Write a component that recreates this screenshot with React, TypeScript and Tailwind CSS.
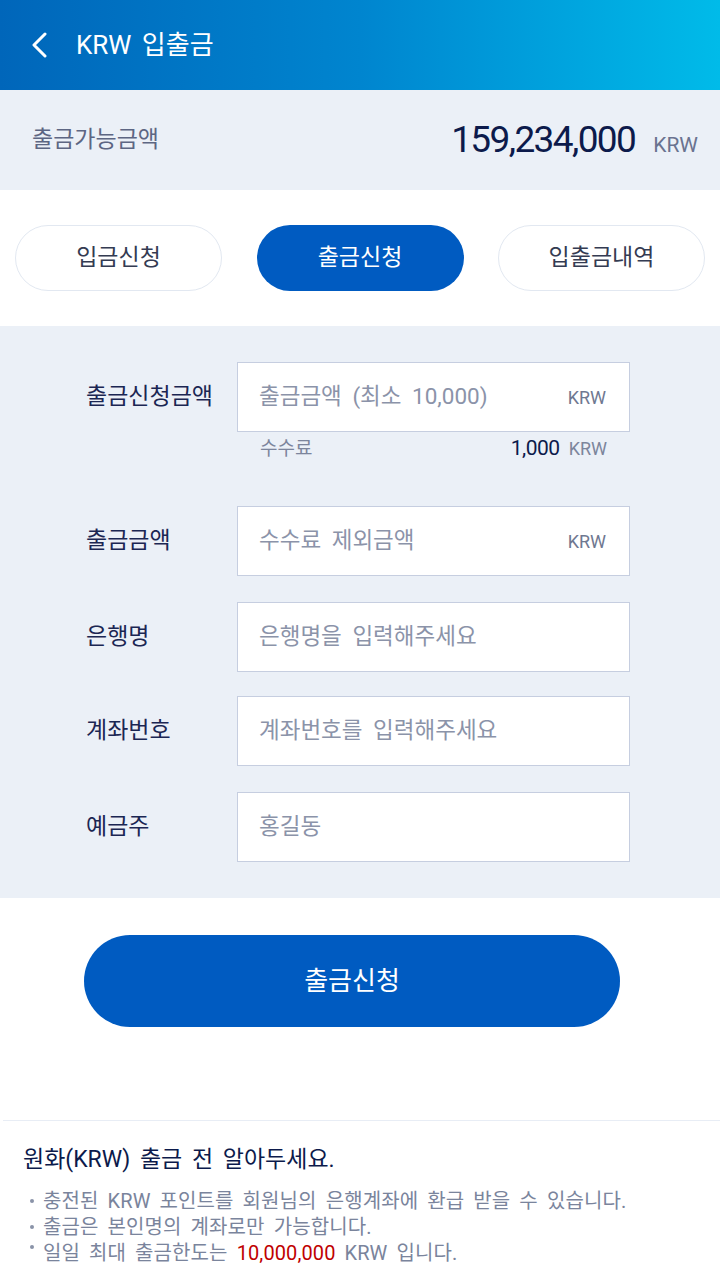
const font = { fontFamily: 'Roboto, "Noto Sans CJK KR", "Noto Sans", sans-serif' };

const Field = ({ label, placeholder, unit }: { label: string; placeholder: string; unit?: string }) => (
  <div className="flex items-center">
    <div className="w-[151px] text-[23px] text-[#1b2653]">{label}</div>
    <div className="flex h-[70px] w-[393px] items-center justify-between border border-[#c6cee0] bg-white pl-[21px] pr-[23px]">
      <span className="text-[22.5px] text-[#8b93a9] [word-spacing:5px]">{placeholder}</span>
      {unit && <span className="text-[18px] text-[#6f7891]">{unit}</span>}
    </div>
  </div>
);

const App = () => {
  return (
    <div className="min-h-[1280px] w-[720px] bg-white" style={font}>
      {/* header */}
      <div className="flex h-[90px] items-center bg-gradient-to-r from-[#0066ba] via-[#0085cf] to-[#00bbe9] pl-[30px]">
        <svg width="20" height="26" viewBox="0 0 20 26" fill="none">
          <polyline points="15,2 4,13 15,24" stroke="white" strokeWidth="3" strokeLinecap="round" strokeLinejoin="round" />
        </svg>
        <h1 className="ml-[26px] text-[26px] text-white [word-spacing:4px]">KRW 입출금</h1>
      </div>

      {/* balance */}
      <div className="flex h-[100px] items-center justify-between bg-[#ebf0f7] pl-[32px] pr-[22px]">
        <span className="text-[23px] text-[#5d6683]">출금가능금액</span>
        <div className="flex items-baseline">
          <span className="text-[37px] tracking-[-1.6px] text-[#0c1a4b]">159,234,000</span>
          <span className="ml-[18px] text-[21px] text-[#6a7390]">KRW</span>
        </div>
      </div>

      {/* tabs */}
      <div className="flex h-[136px] items-center justify-between px-[15px]">
        <button className="h-[66px] w-[207px] rounded-full border border-[#e2e8f1] bg-white text-[23px] text-[#343b52]">입금신청</button>
        <button className="h-[66px] w-[207px] rounded-full bg-[#005bc1] text-[23px] text-white">출금신청</button>
        <button className="h-[66px] w-[207px] rounded-full border border-[#e2e8f1] bg-white text-[23px] text-[#343b52]">입출금내역</button>
      </div>

      {/* form */}
      <div className="bg-[#ebf0f7] pb-[36px] pl-[86px] pt-[36px]">
        <Field label="출금신청금액" placeholder="출금금액 (최소 10,000)" unit="KRW" />
        <div className="ml-[151px] flex h-[34px] w-[393px] items-center justify-between pl-[23px] pr-[23px]">
          <span className="text-[19px] text-[#7c859c]">수수료</span>
          <div className="flex items-baseline">
            <span className="text-[21px] tracking-[-0.5px] text-[#0c1a4b]">1,000</span>
            <span className="ml-[9px] text-[18px] text-[#7c859c]">KRW</span>
          </div>
        </div>
        <div className="mt-[40px]">
          <Field label="출금금액" placeholder="수수료 제외금액" unit="KRW" />
        </div>
        <div className="mt-[26px]">
          <Field label="은행명" placeholder="은행명을 입력해주세요" />
        </div>
        <div className="mt-[24px]">
          <Field label="계좌번호" placeholder="계좌번호를 입력해주세요" />
        </div>
        <div className="mt-[26px]">
          <Field label="예금주" placeholder="홍길동" />
        </div>
      </div>

      {/* submit */}
      <div className="pl-[84px] pt-[37px]">
        <button className="h-[92px] w-[536px] rounded-full bg-[#005bc1] text-[26px] text-white">출금신청</button>
      </div>

      {/* notice */}
      <div className="ml-[3px] mt-[93px] border-t border-[#e8edf5] pl-[20px] pt-[22px]">
        <h2 className="text-[23px] text-[#0c1a4b] [word-spacing:4px]">원화(KRW) 출금 전 알아두세요.</h2>
        <ul className="mt-[10px] text-[20px] leading-[26px] tracking-[0.1px] text-[#7a849c] [word-spacing:4px]">
          <li className="flex items-center">
            <span className="ml-[7px] mr-[9px] h-[4px] w-[4px] rounded-full bg-[#8a93a8]" />
            충전된 KRW 포인트를 회원님의 은행계좌에 환급 받을 수 있습니다.
          </li>
          <li className="flex items-center">
            <span className="ml-[7px] mr-[9px] h-[4px] w-[4px] rounded-full bg-[#8a93a8]" />
            출금은 본인명의 계좌로만 가능합니다.
          </li>
          <li className="flex items-center">
            <span className="mb-[12px] ml-[7px] mr-[9px] h-[4px] w-[4px] rounded-full bg-[#8a93a8]" />
            <span>
              일일 최대 출금한도는 <span className="text-[#c00000]">10,000,000</span> KRW 입니다.
            </span>
          </li>
        </ul>
      </div>
    </div>
  );
};

export default App;
